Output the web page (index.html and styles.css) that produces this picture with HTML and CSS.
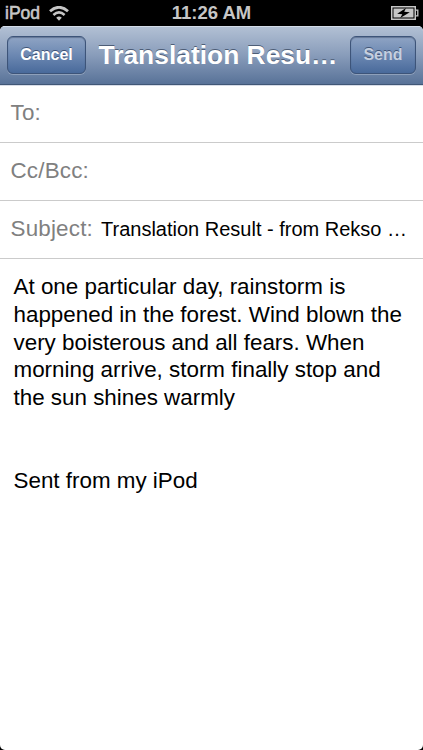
FILE: index.html
```html
<!DOCTYPE html>
<html lang="en">
<head>
    <meta charset="UTF-8">
    <meta name="viewport" content="width=device-width, initial-scale=1.0">
    <title>Translation Result</title>
    <link rel="stylesheet" href="styles.css">
</head>
<body>
    <div class="status-bar">
        <div class="status-left">
            <span class="device">iPod</span>
            <svg class="wifi" width="20" height="15" viewBox="0 0 20 15">
                <path d="M1 5.2 Q10 -2.6 19 5.2" fill="none" stroke="#c6c6c6" stroke-width="2.8"/>
                <path d="M4.4 8.9 Q10 4 15.6 8.9" fill="none" stroke="#c6c6c6" stroke-width="2.6"/>
                <path d="M7.2 11.8 Q10 9 12.8 11.8 L10 14.8 Z" fill="#c6c6c6"/>
            </svg>
        </div>
        <span class="time">11:26 AM</span>
        <div class="status-right">
            <svg width="28" height="14" viewBox="0 0 28 14">
                <rect x="0.75" y="0.75" width="23.5" height="12.5" fill="#000" stroke="#c6c6c6" stroke-width="1.5"/>
                <rect x="2.5" y="2.5" width="20" height="9" fill="#c6c6c6"/>
                <path d="M24.5 4.2 H26.8 V9.8 H24.5" fill="none" stroke="#c6c6c6" stroke-width="1.3"/>
                <path d="M15 2 L6.2 7.8 L11.3 8.3 L9.2 12 L18.8 6.2 L13.2 5.8 Z" fill="#000"/>
            </svg>
        </div>
    </div>

    <div class="compose">
        <header>
            <button class="cancel">Cancel</button>
            <h1>Translation Resu…</h1>
            <button class="send" disabled>Send</button>
        </header>

        <div class="field">
            <label>To:</label>
        </div>
        <div class="field">
            <label>Cc/Bcc:</label>
        </div>
        <div class="field">
            <label>Subject:</label>
            <span class="subject">Translation Result - from Rekso …</span>
        </div>

        <div class="message">
            At one particular day, rainstorm is<br>
            happened in the forest. Wind blown the<br>
            very boisterous and all fears. When<br>
            morning arrive, storm finally stop and<br>
            the sun shines warmly<br>
            <br>
            <br>
            Sent from my iPod
        </div>
    </div>
</body>
</html>
```

FILE: styles.css
```css
* {
    margin: 0;
    padding: 0;
    box-sizing: border-box;
}

body {
    display: flex;
    flex-direction: column;
    height: 100vh;
    overflow: hidden;
    background: #000;
    font-family: "Liberation Sans", Arial, Helvetica, sans-serif;
}

/* status bar */
.status-bar {
    display: grid;
    grid-template-columns: 1fr auto 1fr;
    align-items: center;
    height: 26px;
    padding: 0 4px 0 5px;
    color: #c6c6c6;
    font-size: 18px;
    font-weight: bold;
    line-height: 26px;
}

.status-left {
    display: flex;
    align-items: center;
    gap: 9px;
}

.device {
    font-size: 17.5px;
    font-weight: normal;
    -webkit-text-stroke: 0.6px #c6c6c6;
}

.time {
    padding-right: 1px;
    font-size: 18.5px;
}

.status-right {
    display: flex;
    justify-content: flex-end;
}

/* compose sheet */
.compose {
    flex: 1;
    background: #fff;
    border-radius: 5px;
    overflow: hidden;
}

header {
    display: flex;
    align-items: center;
    height: 59px;
    padding: 0 7px 1px;
    background: linear-gradient(#b2c0d4, #889cba 50%, #587298);
    border-top: 1px solid #d3dce8;
    border-bottom: 1px solid #405776;
}

header h1 {
    flex: 1;
    color: #fff;
    font-size: 26.4px;
    line-height: 36px;
    text-align: center;
    text-shadow: 0 -1px 0 #4d5d76;
    white-space: nowrap;
}

button {
    height: 38px;
    border: 1px solid #3d5479;
    border-radius: 6px;
    background: linear-gradient(#8fa4c4, #6c88b2 50%, #496a9b);
    box-shadow: inset 0 1px 1px rgba(40, 55, 85, 0.4), 0 1px 0 rgba(255, 255, 255, 0.25);
    color: #fff;
    font-family: inherit;
    font-size: 16px;
    font-weight: bold;
    text-shadow: 0 -1px 0 #405476;
}

.cancel {
    width: 79px;
}

.send {
    width: 66px;
    color: #c5cfdf;
}

/* address and subject rows */
.field {
    display: flex;
    align-items: center;
    height: 58px;
    padding: 0 10px 2px 10.5px;
    border-bottom: 1px solid #cbcbcb;
    white-space: nowrap;
}

header + .field {
    border-top: 1px solid #d8dde8;
}

.field label {
    color: #808080;
    font-size: 22.4px;
    letter-spacing: 0.2px;
}

.subject {
    margin-left: 8px;
    padding-top: 2px;
    font-size: 20px;
}

.message {
    padding: 14px 13.5px;
    font-size: 22.4px;
    line-height: 27.75px;
    white-space: nowrap;
}
```
